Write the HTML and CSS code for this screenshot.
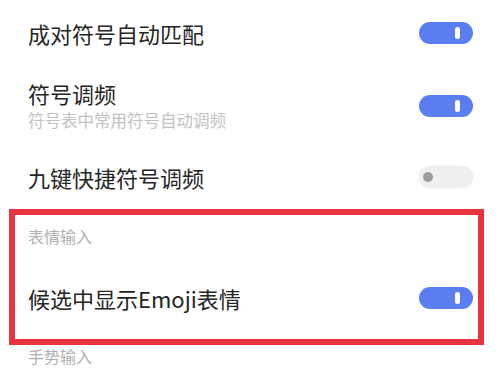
FILE: index.html
```html
<!DOCTYPE html>
<html lang="zh-CN">
<head>
    <meta charset="UTF-8">
    <meta name="viewport" content="width=device-width, initial-scale=1.0">
    <title>符号设置</title>
    <link rel="stylesheet" href="styles.css">
</head>
<body>
    <!-- 设置列表 -->
    <div class="settings">
        <div class="row row-first">
            <div class="title">成对符号自动匹配</div>
            <div class="switch on"><span class="knob"></span></div>
        </div>

        <div class="row row-sub">
            <div class="text">
                <div class="title">符号调频</div>
                <div class="desc">符号表中常用符号自动调频</div>
            </div>
            <div class="switch on"><span class="knob"></span></div>
        </div>

        <div class="row row-third">
            <div class="title">九键快捷符号调频</div>
            <div class="switch off"><span class="knob"></span></div>
        </div>

        <!-- 红框标注区域 -->
        <div class="highlight">
            <div class="section">表情输入</div>
            <div class="row row-emoji">
                <div class="title">候选中显示Emoji表情</div>
                <div class="switch on"><span class="knob"></span></div>
            </div>
        </div>

        <div class="section section-last">手势输入</div>
    </div>
</body>
</html>
```

FILE: styles.css
```css
/* 基础样式 */
body {
    margin: 0;
    background-color: #fff;
    font-family: "Noto Sans CJK SC", "Noto Sans", sans-serif;
    color: #252525;
}

.settings {
    padding: 0 27px 0 28px;
}

/* 列表行 */
.row {
    display: flex;
    align-items: center;
    justify-content: space-between;
}

.row-first {
    height: 66px;
}

.row-sub {
    height: 79px;
}

.row-third {
    height: 64px;
}

.row-emoji {
    height: 82px;
}

.title {
    font-size: 22px;
    line-height: 28px;
}

.desc {
    font-size: 16.5px;
    line-height: 26px;
    color: #c2c2c2;
}

.text {
    padding-top: 1px;
}

/* 分组标题 */
.section {
    font-size: 16px;
    line-height: 42px;
    color: #b0b0b0;
}

.section-last {
    line-height: 22px;
}

/* 红框 */
.highlight {
    margin: 0 -11px 0 -19px;
    padding: 0 5px 0 13px;
    border: 6px solid #e8343f;
}

/* 开关 */
.switch {
    width: 54px;
    height: 22px;
    border-radius: 11px;
    display: flex;
    align-items: center;
    box-sizing: border-box;
}

.switch.on {
    background-color: #5a7ef0;
    justify-content: flex-end;
    padding-right: 13px;
}

.switch.on .knob {
    width: 5px;
    height: 12px;
    border-radius: 3px;
    background-color: #fff;
}

.switch.off {
    background-color: #efefef;
    padding-left: 4px;
    box-shadow: 0 0 3px rgba(0, 0, 0, 0.06);
}

.switch.off .knob {
    width: 10px;
    height: 10px;
    border-radius: 50%;
    background-color: #9c9c9c;
}
```
